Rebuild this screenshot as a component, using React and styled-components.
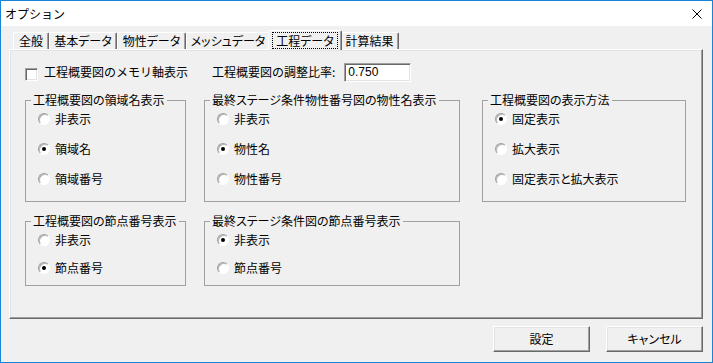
import React from "react"
import styled, { createGlobalStyle } from "styled-components"

const GlobalStyle = createGlobalStyle`
  html, body {
    margin: 0;
    padding: 0;
    background: #ffffff;
  }
  body {
    font-family: "Noto Sans CJK JP", "Noto Sans", sans-serif;
    font-size: 12px;
    color: #000000;
  }
`

const Window = styled.div`
  width: 713px;
  height: 363px;
  box-sizing: border-box;
  border: 1px solid #1883d7;
  background: #f0f0f0;
  display: flex;
  flex-direction: column;
`
const TitleBar = styled.div`
  height: 25px;
  flex: none;
  background: #ffffff;
  display: flex;
  align-items: center;
  justify-content: space-between;
  padding: 0 10px 0 4px;
  font-size: 12px;
  line-height: 14px;
`
const Body = styled.div`
  flex: 1;
  display: flex;
  flex-direction: column;
  padding: 4px 9px 0 8px;
`
const TabStrip = styled.div`
  height: 19px;
  display: flex;
  align-items: flex-end;
  padding-left: 4px;
`
const Tab = styled.div`
  width: ${(p) => (p.$active ? p.$w + 4 : p.$w)}px;
  height: ${(p) => (p.$active ? 20 : 17)}px;
  margin: ${(p) => (p.$active ? "0 -2px -1px" : "0")};
  box-sizing: border-box;
  display: flex;
  align-items: center;
  justify-content: center;
  flex: none;
  background: #f0f0f0;
  border-top: 1px solid #ffffff;
  border-left: 1px solid #ffffff;
  border-right: 1px solid #696969;
  border-radius: 2px 2px 0 0;
  box-shadow: inset -1px 0 0 #a0a0a0;
  z-index: ${(p) => (p.$active ? 1 : 0)};
  line-height: 14px;
  white-space: nowrap;
  font-feature-settings: "palt";
`
const Focus = styled.span`
  outline: 1px dotted #000000;
  padding: 1px 3px 0;
`
const Panel = styled.div`
  height: 270px;
  box-sizing: border-box;
  border: 1px solid;
  border-color: #ffffff #696969 #696969 #ffffff;
  box-shadow: inset -1px -1px 0 #a0a0a0, inset 1px 1px 0 #e3e3e3;
  padding: 13px 0 0 15px;
  display: grid;
  grid-template-columns: 179px 278px 204px;
  row-gap: 12px;
  align-content: start;
`
const TopRow = styled.div`
  height: 18px;
  display: flex;
  align-items: center;
  gap: ${(p) => p.$gap}px;
  padding-left: ${(p) => p.$indent}px;
  grid-column: ${(p) => p.$span};
  line-height: 14px;
  white-space: nowrap;
`
const CheckBox = styled.span`
  width: 13px;
  height: 13px;
  box-sizing: border-box;
  margin-top: 5px;
  background: #ffffff;
  border: 1px solid;
  border-color: #a0a0a0 #ffffff #ffffff #a0a0a0;
  box-shadow: inset 1px 1px 0 #696969, inset -1px -1px 0 #e3e3e3;
`
const NumberInput = styled.div`
  width: 67px;
  height: 19px;
  box-sizing: border-box;
  background: #ffffff;
  border: 1px solid;
  border-color: #a0a0a0 #ffffff #ffffff #a0a0a0;
  box-shadow: inset 1px 1px 0 #696969, inset -1px -1px 0 #e3e3e3;
  padding: 1px 0 0 3px;
  font-family: "Liberation Sans", Arial, sans-serif;
  font-size: 12px;
  line-height: 15px;
`
const Group = styled.fieldset`
  margin: 0;
  width: ${(p) => p.$w}px;
  height: ${(p) => p.$h}px;
  box-sizing: border-box;
  border: 1px solid #a0a0a0;
  padding: 5px 0 0 0;
  min-width: 0;
`
const Legend = styled.legend`
  margin-left: 5px;
  padding: 0 2px;
  font-size: 12px;
  line-height: 14px;
  white-space: nowrap;
  font-feature-settings: "palt";
`
const RadioList = styled.div`
  display: flex;
  flex-direction: column;
  gap: ${(p) => p.$gap}px;
  padding-left: 12px;
`
const RadioRow = styled.div`
  height: 14px;
  display: flex;
  align-items: center;
  gap: 5px;
  line-height: 14px;
  white-space: nowrap;
  font-feature-settings: "palt";
`
const RadioDot = styled.span`
  width: 12px;
  height: 12px;
  box-sizing: border-box;
  border-radius: 50%;
  background: #ffffff;
  border: 1px solid;
  border-color: #a0a0a0 #ffffff #ffffff #a0a0a0;
  box-shadow: inset 1px 1px 0 #b4b4b4;
  display: flex;
  align-items: center;
  justify-content: center;
  &::after {
    content: "";
    width: 4px;
    height: 4px;
    border-radius: 50%;
    background: ${(p) => (p.$on ? "#000000" : "transparent")};
  }
`
const ButtonRow = styled.div`
  display: flex;
  justify-content: flex-end;
  gap: 16px;
  margin-top: 7px;
`
const Button = styled.div`
  width: 97px;
  height: 26px;
  box-sizing: border-box;
  border: 1px solid;
  border-color: #ffffff #696969 #696969 #ffffff;
  box-shadow: inset -1px -1px 0 #a0a0a0, inset 1px 1px 0 #e3e3e3;
  background: #f0f0f0;
  display: flex;
  align-items: center;
  justify-content: center;
  line-height: 14px;
  font-feature-settings: "palt";
`

const tabs = [
  { label: "全般", w: 36 },
  { label: "基本データ", w: 68 },
  { label: "物性データ", w: 69 },
  { label: "メッシュデータ", w: 84 },
  { label: "工程データ", w: 70, active: true },
  { label: "計算結果", w: 59 },
]

const Radios = ({ items, selected, gap }) => (
  <RadioList $gap={gap}>
    {items.map((label, i) => (
      <RadioRow key={label}>
        <RadioDot $on={i === selected} />
        {label}
      </RadioRow>
    ))}
  </RadioList>
)

const App = () => {
  return (
    <>
      <GlobalStyle />
      <Window>
        <TitleBar>
          <span>オプション</span>
          <svg width="10" height="10" viewBox="0 0 10 10">
            <path d="M0.5 0.5 L9.5 9.5 M9.5 0.5 L0.5 9.5" stroke="#000" strokeWidth="1" fill="none" />
          </svg>
        </TitleBar>
        <Body>
          <TabStrip>
            {tabs.map((t) => (
              <Tab key={t.label} $w={t.w} $active={t.active}>
                {t.active ? <Focus>{t.label}</Focus> : t.label}
              </Tab>
            ))}
          </TabStrip>
          <Panel>
            <TopRow $span="1" $gap={6} $indent={0}>
              <CheckBox />
              工程概要図のメモリ軸表示
            </TopRow>
            <TopRow $span="2 / span 2" $gap={9} $indent={8}>
              工程概要図の調整比率:
              <NumberInput>0.750</NumberInput>
            </TopRow>

            <Group $w={161} $h={109}>
              <Legend>工程概要図の領域名表示</Legend>
              <Radios items={["非表示", "領域名", "領域番号"]} selected={1} gap={16} />
            </Group>
            <Group $w={256} $h={109}>
              <Legend>最終ステージ条件物性番号図の物性名表示</Legend>
              <Radios items={["非表示", "物性名", "物性番号"]} selected={1} gap={16} />
            </Group>
            <Group $w={204} $h={109}>
              <Legend>工程概要図の表示方法</Legend>
              <Radios items={["固定表示", "拡大表示", "固定表示と拡大表示"]} selected={0} gap={16} />
            </Group>

            <Group $w={161} $h={72}>
              <Legend>工程概要図の節点番号表示</Legend>
              <Radios items={["非表示", "節点番号"]} selected={1} gap={14} />
            </Group>
            <Group $w={256} $h={72}>
              <Legend>最終ステージ条件図の節点番号表示</Legend>
              <Radios items={["非表示", "節点番号"]} selected={0} gap={14} />
            </Group>
          </Panel>
          <ButtonRow>
            <Button>設定</Button>
            <Button>キャンセル</Button>
          </ButtonRow>
        </Body>
      </Window>
    </>
  )
}

export default App
